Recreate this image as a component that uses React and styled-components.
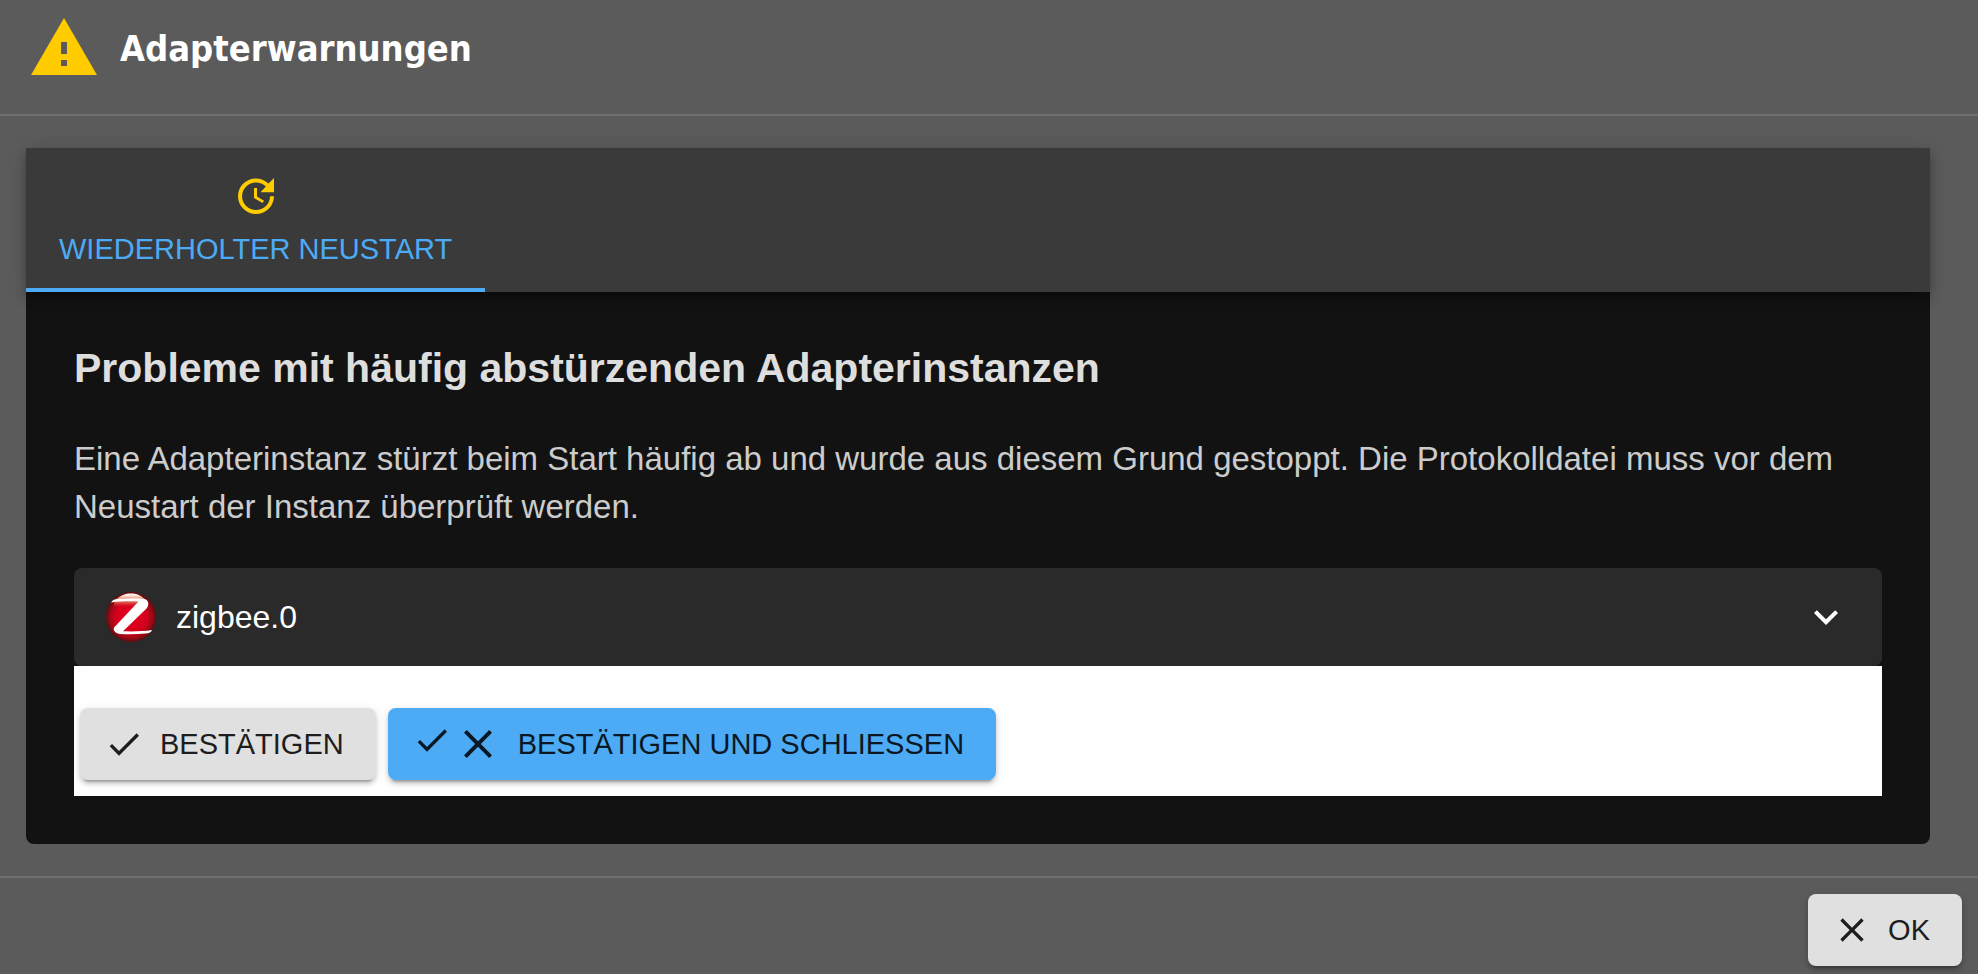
import React, { useState } from 'react'
import styled, { createGlobalStyle } from 'styled-components'

const GlobalStyle = createGlobalStyle`
  *, *::before, *::after {
    box-sizing: border-box;
  }
  body {
    margin: 0;
    background: #5b5b5b;
    font-family: 'Liberation Sans', Helvetica, Arial, sans-serif;
  }
`

const Dialog = styled.div`
  display: flex;
  flex-direction: column;
  min-height: 100vh;
`

const Header = styled.header`
  display: flex;
  align-items: center;
  gap: 20px;
  padding: 12px 28px 30px;
  border-bottom: 2px solid #6f6f6f;
`

const Title = styled.h1`
  margin: 0;
  padding-top: 2px;
  color: #fff;
  font: bold 36px/48px 'DejaVu Sans Condensed', 'Noto Sans', Tahoma, sans-serif;
`

const Content = styled.main`
  flex: 1;
  padding: 32px 48px 32px 26px;
`

const Panel = styled.div`
  background: #121212;
  border-radius: 0 0 8px 8px;
`

const TabBar = styled.div`
  position: relative;
  display: flex;
  background: #3a3a3a;
  box-shadow: 0 4px 8px -2px rgba(0, 0, 0, 0.2), 0 8px 10px rgba(0, 0, 0, 0.14), 0 2px 20px rgba(0, 0, 0, 0.12);
`

const Tab = styled.button`
  display: flex;
  flex-direction: column;
  align-items: center;
  gap: 11px;
  padding: 24px 33px 21px;
  border: 0;
  border-bottom: 4px solid #4dabf5;
  background: none;
  color: #4dabf5;
  font: 29px/36px 'Liberation Sans', Helvetica, Arial, sans-serif;
  text-transform: uppercase;
  white-space: nowrap;
  cursor: pointer;
`

const TabPanel = styled.section`
  padding: 48px;
`

const Heading = styled.h2`
  margin: 0 0 39px;
  color: #dedede;
  font-size: 41px;
  line-height: 56px;
`

const Description = styled.p`
  margin: 0 0 37px;
  color: #cccccc;
  font-size: 33px;
  line-height: 48px;
`

const Instances = styled.div`
  background: #121212;
`

const Instance = styled.button`
  display: flex;
  align-items: center;
  gap: 20px;
  width: 100%;
  padding: 24px 32px;
  border: 0;
  border-radius: 8px;
  background: #2a2a2a;
  color: #fff;
  font: 32px/50px 'Liberation Sans', Helvetica, Arial, sans-serif;
  text-align: left;
  cursor: pointer;
`

const InstanceName = styled.span`
  flex: 1;
`

const Actions = styled.div`
  display: flex;
  flex-wrap: wrap;
  gap: 12px;
  padding: 42px 6px 16px;
  background: #fff;
`

const Button = styled.button`
  display: inline-flex;
  align-items: center;
  gap: 16px;
  height: 72px;
  padding: 0 32px 0 24px;
  border: 0;
  border-radius: 8px;
  background: ${({ $primary }) => ($primary ? '#4dabf5' : '#e0e0e0')};
  color: ${({ $primary }) => ($primary ? '#0b1823' : '#1d1d1d')};
  box-shadow: 0 6px 2px -4px rgba(0, 0, 0, 0.2), 0 4px 4px rgba(0, 0, 0, 0.14), 0 2px 10px rgba(0, 0, 0, 0.12);
  font: 29px/36px 'Liberation Sans', Helvetica, Arial, sans-serif;
  text-transform: uppercase;
  cursor: pointer;
`

const ButtonIcons = styled.span`
  display: flex;
  align-items: flex-start;
  gap: 2px;
`

const Footer = styled.footer`
  display: flex;
  justify-content: flex-end;
  padding: 16px 16px 8px;
  border-top: 2px solid #6f6f6f;
`

const Svg = styled.svg`
  display: block;
  flex: none;
  width: ${({ $size }) => $size}px;
  height: ${({ $size }) => $size}px;
  fill: ${({ $color }) => $color || 'currentColor'};
`

const paths = {
  warning: 'M1 21h22L12 2 1 21zm12-3h-2v-2h2v2zm0-4h-2v-4h2v4z',
  update:
    'M21 10.12h-6.78l2.74-2.82c-2.73-2.7-7.15-2.8-9.88-.1-2.73 2.71-2.73 7.08 0 9.79s7.15 2.71 9.88 0C18.32 15.65 19 14.08 19 12.1h2c0 1.98-.88 4.55-2.64 6.29-3.51 3.48-9.21 3.48-12.72 0-3.5-3.47-3.53-9.11-.02-12.58s9.14-3.47 12.65 0L21 3v7.12zM12.5 8v4.25l3.5 2.08-.72 1.21L11 13V8h1.5z',
  check: 'M9 16.17L4.83 12l-1.42 1.41L9 19 21 7l-1.41-1.41z',
  close:
    'M19 6.41L17.59 5 12 10.59 6.41 5 5 6.41 10.59 12 5 17.59 6.41 19 12 13.41 17.59 19 19 17.59 13.41 12z',
  expand: 'M16.59 8.59L12 13.17 7.41 8.59 6 10l6 6 6-6z',
}

const Icon = ({ name, size, color }) => (
  <Svg viewBox="0 0 24 24" $size={size} $color={color} aria-hidden="true">
    <path d={paths[name]} />
  </Svg>
)

const ZigbeeLogo = () => (
  <Svg viewBox="0 0 50 50" $size={50} aria-hidden="true">
    <defs>
      <radialGradient id="ball" cx="50%" cy="50%" r="50%">
        <stop offset="0%" stopColor="#e2001f" />
        <stop offset="62%" stopColor="#d6001c" />
        <stop offset="85%" stopColor="#9c0a16" />
        <stop offset="100%" stopColor="#5c0d10" />
      </radialGradient>
      <linearGradient id="gloss" x1="0" y1="0" x2="0" y2="1">
        <stop offset="0%" stopColor="#fff" />
        <stop offset="14%" stopColor="#fbe6dd" />
        <stop offset="34%" stopColor="#eda892" />
        <stop offset="65%" stopColor="#dd5a4c" />
        <stop offset="100%" stopColor="#d6001c" stopOpacity="0.4" />
      </linearGradient>
    </defs>
    <circle cx="25" cy="25" r="25" fill="url(#ball)" />
    <path d="M8 11C12 4 18 1.500 25 1.500S36 4 40 9v6H8z" fill="url(#gloss)" />
    <path
      d="M5 10.500C6 8.500 8 7.200 12 7c8-.5 19-.8 26-.2 3.500.8 5 3.600 4 7-.5 1.700-1.500 2.700-3 4.200L17 39.300c9 .3 20 .2 29-1.300-.5 2.300-3 3.300-6.500 3.600-8 .7-17 .9-25 .4C9.500 41.500 6.500 38.500 8.300 35.300L32.500 9.500C24 9.200 13 9.300 5 10.500z"
      fill="#fff"
    />
  </Svg>
)

const App = () => {
  const [expanded, setExpanded] = useState(false)

  return (
    <>
      <GlobalStyle />
      <Dialog role="dialog" aria-labelledby="dialog-title">
        <Header>
          <Icon name="warning" size={72} color="#ffcc00" />
          <Title id="dialog-title">Adapterwarnungen</Title>
        </Header>
        <Content>
          <Panel>
            <TabBar role="tablist">
              <Tab type="button" role="tab" id="restart-tab" aria-selected="true" aria-controls="restart-panel">
                <Icon name="update" size={48} color="#ffcc00" />
                Wiederholter Neustart
              </Tab>
            </TabBar>
            <TabPanel role="tabpanel" id="restart-panel" aria-labelledby="restart-tab">
              <Heading>Probleme mit häufig abstürzenden Adapterinstanzen</Heading>
              <Description>
                Eine Adapterinstanz stürzt beim Start häufig ab und wurde aus diesem Grund gestoppt. Die
                Protokolldatei muss vor dem Neustart der Instanz überprüft werden.
              </Description>
              <Instances>
                <Instance type="button" aria-expanded={expanded} onClick={() => setExpanded(!expanded)}>
                  <ZigbeeLogo />
                  <InstanceName>zigbee.0</InstanceName>
                  <Icon name="expand" size={48} />
                </Instance>
              </Instances>
              <Actions>
                <Button type="button">
                  <Icon name="check" size={40} />
                  Bestätigen
                </Button>
                <Button type="button" $primary>
                  <ButtonIcons>
                    <Icon name="check" size={40} />
                    <Icon name="close" size={48} />
                  </ButtonIcons>
                  Bestätigen und schliessen
                </Button>
              </Actions>
            </TabPanel>
          </Panel>
        </Content>
        <Footer>
          <Button type="button">
            <Icon name="close" size={40} />
            OK
          </Button>
        </Footer>
      </Dialog>
    </>
  )
}

export default App
